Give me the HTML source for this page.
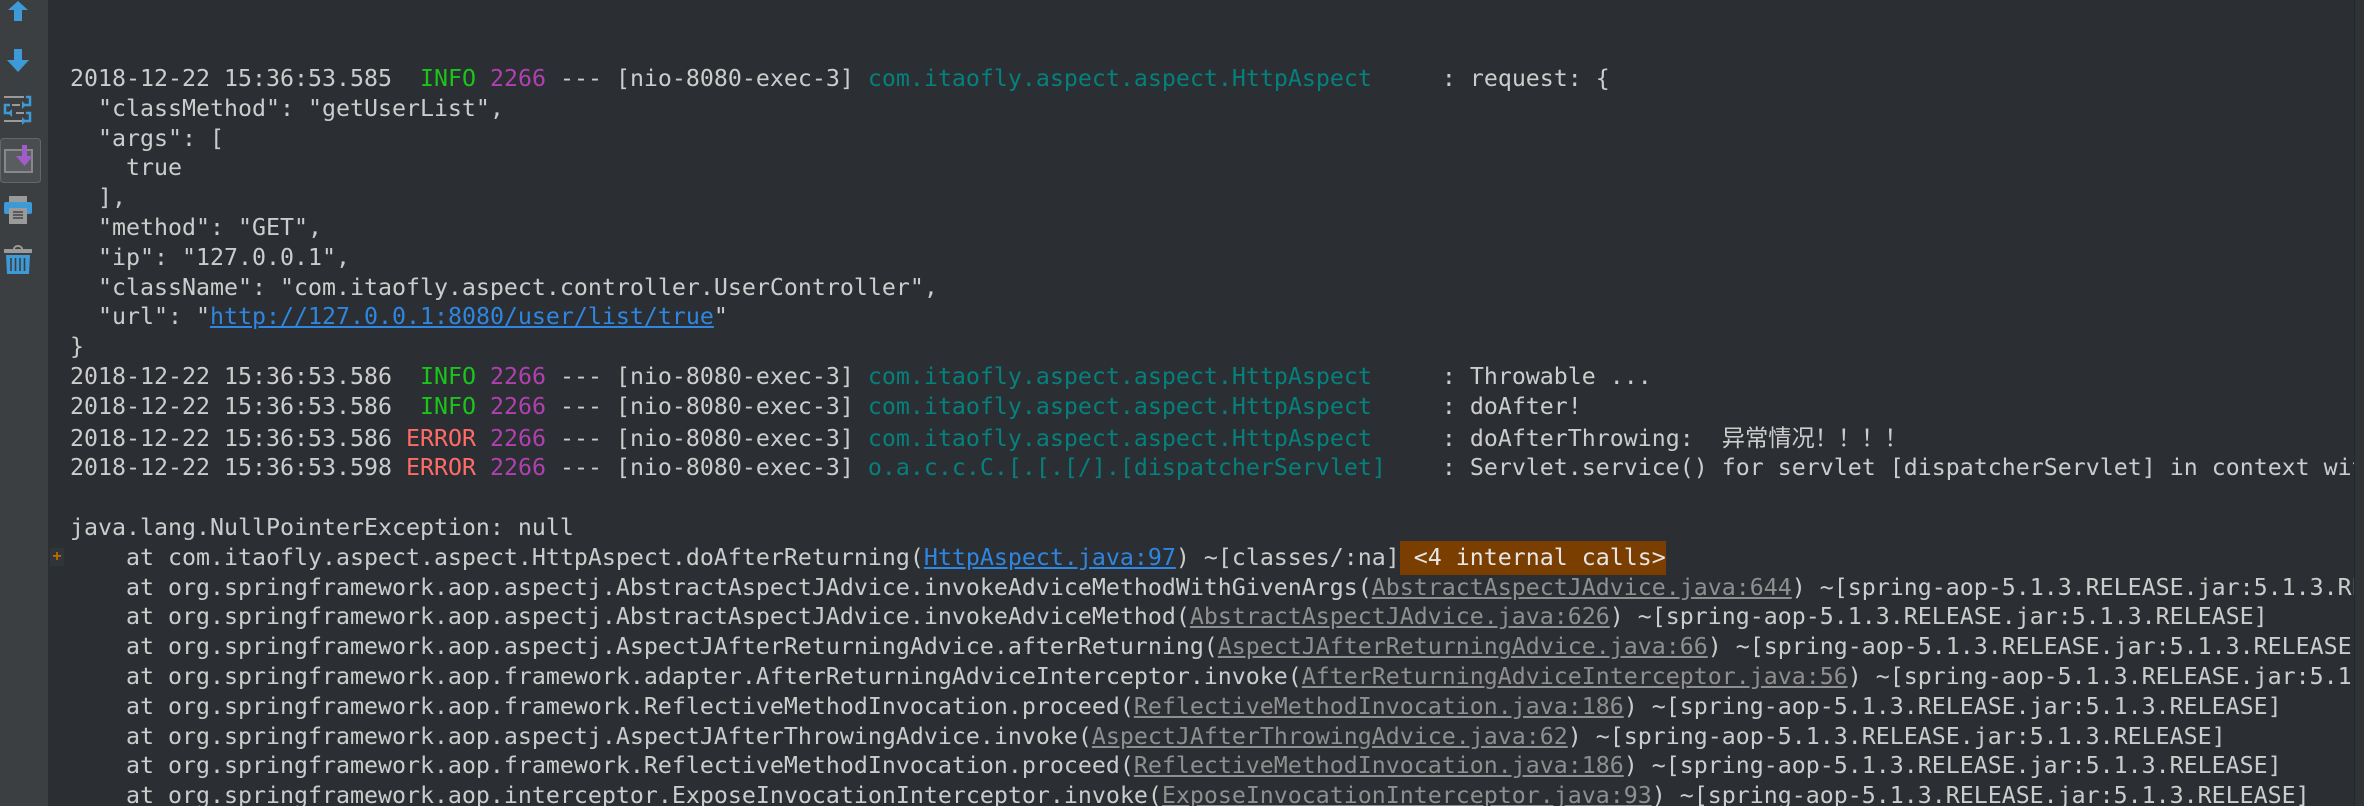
<!DOCTYPE html>
<html><head><meta charset="utf-8"><style>
html,body{margin:0;padding:0;width:2364px;height:806px;overflow:hidden;background:#2b2f33;}
#side{position:absolute;left:0;top:0;width:48px;height:806px;background:#3c3f41;}
#main{position:absolute;left:48px;top:0;width:2306px;height:806px;overflow:hidden;background:#2b2f33;}
#sb{position:absolute;left:2354px;top:0;width:10px;height:806px;background:#2f3336;border-left:1px solid #25282b;}
pre{position:absolute;left:22px;top:64px;margin:0;font-family:"DejaVu Sans Mono","Liberation Mono","Noto Sans CJK SC",monospace;font-size:23.25px;line-height:29.8px;color:#cccccc;white-space:pre;}
.g{color:#1bc41b}.p{color:#b040b0}.t{color:#05807c}.r{color:#ff6b68}
.l{color:#2f86e0;text-decoration:underline}
.u{color:#8f8f8f;text-decoration:underline}
.ic{background:#7a3e00;color:#e6e6e6;padding:3px 0 4px}
.cjk{font-family:"Noto Sans CJK SC",sans-serif;}
#plus{position:absolute;left:50px;top:548px;width:14px;height:18px;color:#c46a00;font:bold 16px "Liberation Sans",sans-serif;line-height:18px;text-align:center;background:#30353a;}
</style></head><body>
<div id="side">
<svg width="48" height="290" viewBox="0 0 48 290">
<path d="M18 1 L8 10 L14 10 L14 21 L22 21 L22 10 L28 10 Z" fill="#3e9ad6"/>
<path d="M14 49 L22 49 L22 60 L29 60 L18 72 L7 60 L14 60 Z" fill="#3e9ad6"/>
<g stroke="#9a9a9a" stroke-width="2"><line x1="4" y1="97" x2="24" y2="97"/><line x1="12" y1="105" x2="20" y2="105"/><line x1="16" y1="113" x2="24" y2="113"/><line x1="4" y1="121" x2="24" y2="121"/></g>
<g stroke="#3e9ad6" stroke-width="2.5" fill="none"><path d="M26 97 h4 v8 h-6"/><path d="M10 105 h-5 v8 h6"/><path d="M26 113 h4 v8 h-6"/></g>
<path d="M22 101 l4 4 l-4 4z M12 109 l-4 4 l4 4z M22 117 l4 4 l-4 4z" fill="#3e9ad6"/>
<rect x="0.5" y="138.5" width="40" height="44" rx="3" fill="#4a4d50" stroke="#666" stroke-width="1"/>
<rect x="5" y="150" width="27" height="22" fill="#5a5d60" stroke="#888" stroke-width="2"/>
<path d="M22 145 L27 145 L27 156 L33 156 L24.5 166 L16 156 L22 156 Z" fill="#a05cc8"/>
<rect x="9" y="196" width="18" height="6" fill="#9a9a9a"/>
<rect x="4" y="202" width="28" height="12" rx="2" fill="#3e9ad6"/>
<rect x="9" y="208" width="18" height="16" fill="#9a9a9a"/>
<g stroke="#3c3f41" stroke-width="1.4"><line x1="13" y1="212" x2="23" y2="212"/><line x1="13" y1="215" x2="23" y2="215"/><line x1="13" y1="218" x2="23" y2="218"/></g>
<path d="M14 249 a4 3 0 0 1 8 0" stroke="#9a9a9a" stroke-width="2" fill="none"/>
<rect x="4" y="249" width="28" height="4" fill="#9a9a9a"/>
<path d="M6 255 L30 255 L29 274 L7 274 Z" fill="#3e9ad6"/>
<g stroke="#3c3f41" stroke-width="1.6"><line x1="11" y1="258" x2="11" y2="271"/><line x1="15.5" y1="258" x2="15.5" y2="271"/><line x1="20" y1="258" x2="20" y2="271"/><line x1="24.5" y1="258" x2="24.5" y2="271"/></g>
</svg>
</div>
<div id="main">
<pre>2018-12-22 15:36:53.585  <span class="g">INFO</span> <span class="p">2266</span> --- [nio-8080-exec-3] <span class="t">com.itaofly.aspect.aspect.HttpAspect    </span> : request: {
  "classMethod": "getUserList",
  "args": [
    true
  ],
  "method": "GET",
  "ip": "127.0.0.1",
  "className": "com.itaofly.aspect.controller.UserController",
  "url": "<span class="l">http://127.0.0.1:8080/user/list/true</span>"
}
2018-12-22 15:36:53.586  <span class="g">INFO</span> <span class="p">2266</span> --- [nio-8080-exec-3] <span class="t">com.itaofly.aspect.aspect.HttpAspect    </span> : Throwable ...
2018-12-22 15:36:53.586  <span class="g">INFO</span> <span class="p">2266</span> --- [nio-8080-exec-3] <span class="t">com.itaofly.aspect.aspect.HttpAspect    </span> : doAfter!
2018-12-22 15:36:53.586 <span class="r">ERROR</span> <span class="p">2266</span> --- [nio-8080-exec-3] <span class="t">com.itaofly.aspect.aspect.HttpAspect    </span> : doAfterThrowing:  <span class="cjk">异常情况！！！！</span>
2018-12-22 15:36:53.598 <span class="r">ERROR</span> <span class="p">2266</span> --- [nio-8080-exec-3] <span class="t">o.a.c.c.C.[.[.[/].[dispatcherServlet]   </span> : Servlet.service() for servlet [dispatcherServlet] in context with path [] threw exception

java.lang.NullPointerException: null
    at com.itaofly.aspect.aspect.HttpAspect.doAfterReturning(<span class="l">HttpAspect.java:97</span>) ~[classes/:na]<span class="ic"> &lt;4 internal calls&gt;</span>
    at org.springframework.aop.aspectj.AbstractAspectJAdvice.invokeAdviceMethodWithGivenArgs(<span class="u">AbstractAspectJAdvice.java:644</span>) ~[spring-aop-5.1.3.RELEASE.jar:5.1.3.RELEASE]
    at org.springframework.aop.aspectj.AbstractAspectJAdvice.invokeAdviceMethod(<span class="u">AbstractAspectJAdvice.java:626</span>) ~[spring-aop-5.1.3.RELEASE.jar:5.1.3.RELEASE]
    at org.springframework.aop.aspectj.AspectJAfterReturningAdvice.afterReturning(<span class="u">AspectJAfterReturningAdvice.java:66</span>) ~[spring-aop-5.1.3.RELEASE.jar:5.1.3.RELEASE]
    at org.springframework.aop.framework.adapter.AfterReturningAdviceInterceptor.invoke(<span class="u">AfterReturningAdviceInterceptor.java:56</span>) ~[spring-aop-5.1.3.RELEASE.jar:5.1.3.RELEASE]
    at org.springframework.aop.framework.ReflectiveMethodInvocation.proceed(<span class="u">ReflectiveMethodInvocation.java:186</span>) ~[spring-aop-5.1.3.RELEASE.jar:5.1.3.RELEASE]
    at org.springframework.aop.aspectj.AspectJAfterThrowingAdvice.invoke(<span class="u">AspectJAfterThrowingAdvice.java:62</span>) ~[spring-aop-5.1.3.RELEASE.jar:5.1.3.RELEASE]
    at org.springframework.aop.framework.ReflectiveMethodInvocation.proceed(<span class="u">ReflectiveMethodInvocation.java:186</span>) ~[spring-aop-5.1.3.RELEASE.jar:5.1.3.RELEASE]
    at org.springframework.aop.interceptor.ExposeInvocationInterceptor.invoke(<span class="u">ExposeInvocationInterceptor.java:93</span>) ~[spring-aop-5.1.3.RELEASE.jar:5.1.3.RELEASE]</pre>
</div>
<div id="plus">+</div>
<div id="sb"></div>
</body></html>
